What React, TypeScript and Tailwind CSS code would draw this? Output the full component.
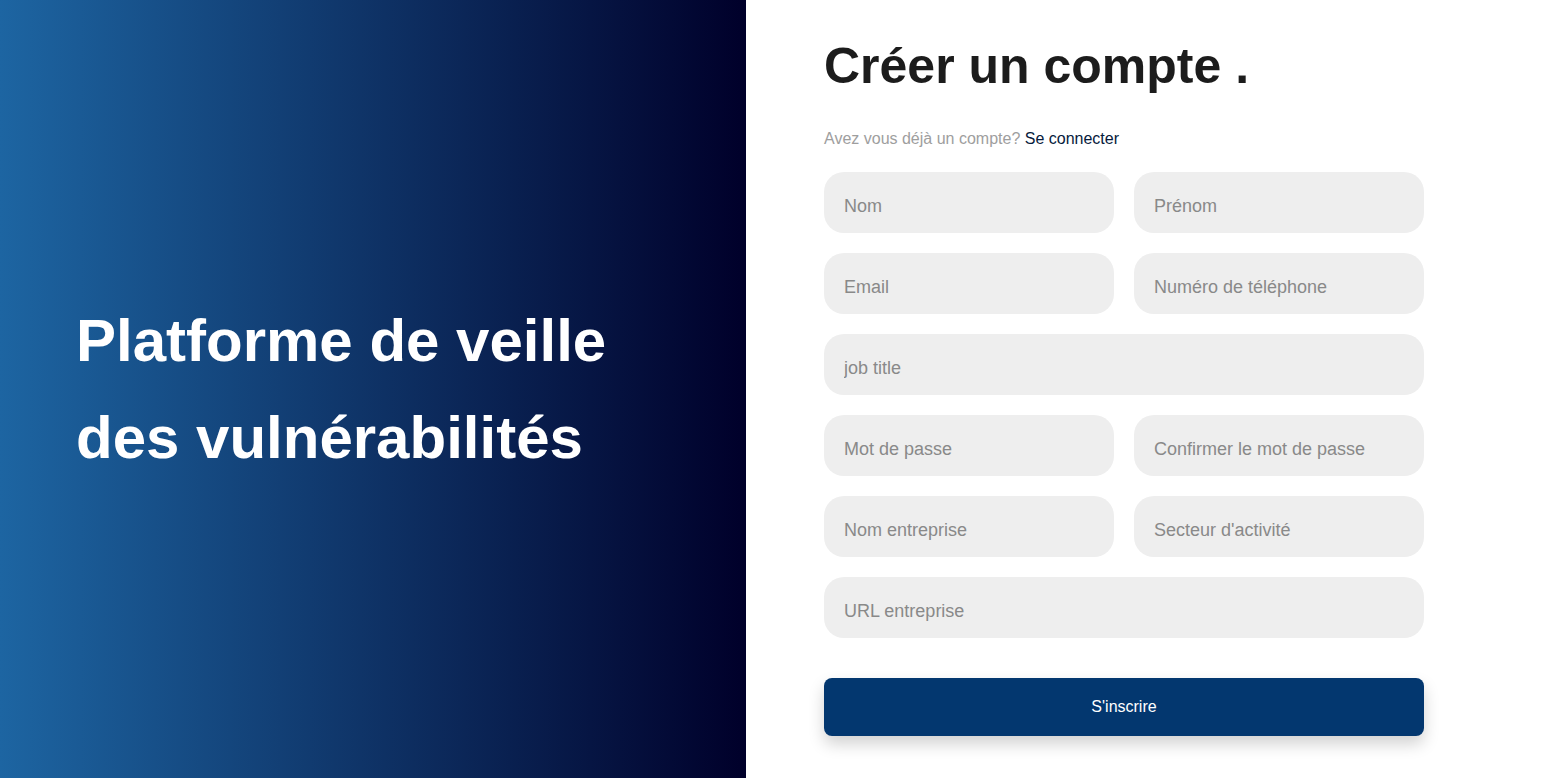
import React from "react";

const fields = [
  [{ name: "nom", placeholder: "Nom" }, { name: "prenom", placeholder: "Prénom" }],
  [{ name: "email", placeholder: "Email" }, { name: "phone", placeholder: "Numéro de téléphone" }],
  [{ name: "job", placeholder: "job title" }],
  [{ name: "password", placeholder: "Mot de passe" }, { name: "confirm", placeholder: "Confirmer le mot de passe" }],
  [{ name: "company", placeholder: "Nom entreprise" }, { name: "sector", placeholder: "Secteur d'activité" }],
  [{ name: "url", placeholder: "URL entreprise" }],
];

export default function App() {
  return (
    <div className="flex h-[778px] w-full overflow-hidden bg-white font-['Liberation_Sans',Arial,sans-serif]">
      {/* Left hero */}
      <div className="flex w-[746px] shrink-0 items-center bg-[linear-gradient(to_right,#1d65a2,#00002a)] pl-[76px]">
        <h1 className="text-[60px] font-bold leading-[97px] text-white">
          Platforme de veille
          <br />
          des vulnérabilités
        </h1>
      </div>

      {/* Right form */}
      <div className="flex-1 pl-[78px] pt-[41px]">
        <h2 className="text-[50px] font-bold leading-none text-[#1c1c1c]">Créer un compte .</h2>
        <p className="mt-[36px] text-base leading-6 text-[#9e9e9e]">
          Avez vous déjà un compte? <a href="#" className="text-[#061a3c]">Se connecter</a>
        </p>

        <form className="mt-[21px] flex w-[600px] flex-col gap-5" onSubmit={(e) => e.preventDefault()}>
          {fields.map((row, i) => (
            <div key={i} className="flex gap-5">
              {row.map((f) => (
                <input
                  key={f.name}
                  name={f.name}
                  type={f.name === "password" || f.name === "confirm" ? "password" : "text"}
                  placeholder={f.placeholder}
                  className="h-[61px] min-w-0 flex-1 rounded-[20px] bg-[#eeeeee] px-5 pt-2 text-[18px] text-[#333] outline-none placeholder:text-[#898989]"
                />
              ))}
            </div>
          ))}

          <button
            type="submit"
            className="mt-5 h-[58px] w-full rounded-lg bg-[#03376f] text-base text-white shadow-[0_8px_16px_rgba(0,0,0,0.18)]"
          >
            S'inscrire
          </button>
        </form>
      </div>
    </div>
  );
}
